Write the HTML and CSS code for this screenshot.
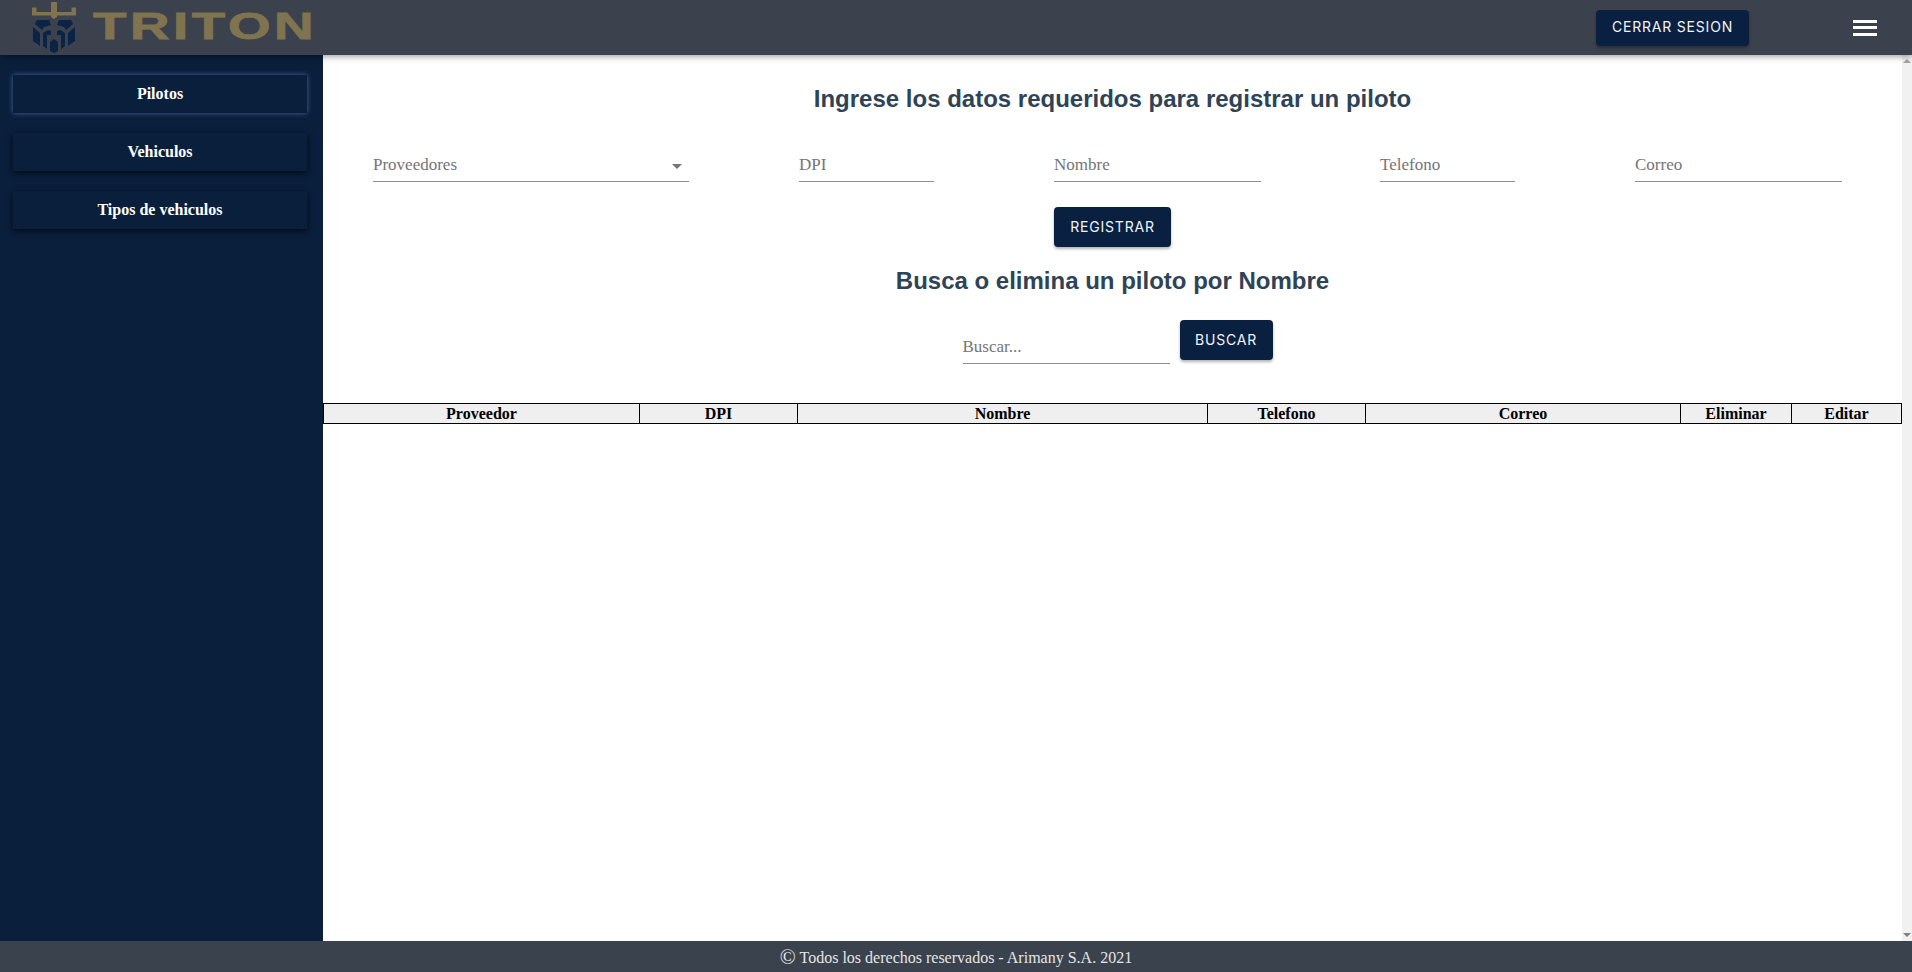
FILE: index.html
```html
<!DOCTYPE html>
<html>
<head>
    <meta charset="utf-8">
    <link rel="stylesheet" href="styles.css">
    <title>Triton - Pilotos</title>
</head>

<body>
    <div class="navbar">
        <div class="brand">
            <svg class="brand-icon" width="44" height="52" viewBox="0 0 44 52">
                <path fill="#7f7350" d="M0 5.500h4.500v4.500H19V0h6v10h14.500V5.500H44v8H25V15l-3 2-3-2v-1.500H0z"/>
                <g fill="#0a2347" transform="translate(0 -2)">
                    <path d="M5 20h12l2 5-7 2-2 3-7-6zM39 20H27l-2 5 7 2 2 3 7-6z"/>
                    <path d="M1 27l7 6v13L1 41zM43 27l-7 6v13l7-5z"/>
                    <path d="M11 33l5-3 3 1v4h-4v14l-4-3zM33 33l-5-3-3 1v4h4v14l4-3z"/>
                    <path d="M18 42l4-3 4 3v9l-4 2-4-2z"/>
                </g>
            </svg>
            <span class="brand-name">TRITON</span>
        </div>
        <button class="btn btn-logout">Cerrar sesion</button>
        <div class="hamburger"><span></span><span></span><span></span></div>
    </div>

    <div class="layout">
        <div class="sidebar">
            <div class="side-item active">Pilotos</div>
            <div class="side-item">Vehiculos</div>
            <div class="side-item">Tipos de vehiculos</div>
        </div>

        <div class="content">
            <h2 class="title title-first">Ingrese los datos requeridos para registrar un piloto</h2>

            <div class="form-row">
                <div class="field field-select">Proveedores<span class="caret"></span></div>
                <div class="field field-short">DPI</div>
                <div class="field field-name">Nombre</div>
                <div class="field field-short">Telefono</div>
                <div class="field field-name">Correo</div>
            </div>

            <div class="form-actions">
                <button class="btn btn-register">Registrar</button>
            </div>

            <h2 class="title">Busca o elimina un piloto por Nombre</h2>

            <div class="search-row">
                <div class="field field-search">Buscar...</div>
                <button class="btn btn-search">Buscar</button>
            </div>

            <table class="tabla">
                <tr>
                    <th class="col-prov">Proveedor</th>
                    <th class="col-mid">DPI</th>
                    <th class="col-name">Nombre</th>
                    <th class="col-mid">Telefono</th>
                    <th class="col-mail">Correo</th>
                    <th class="col-small">Eliminar</th>
                    <th class="col-edit">Editar</th>
                </tr>
            </table>
        </div>

        <div class="scrollbar">
            <span class="arrow-up"></span>
            <span class="arrow-down"></span>
        </div>
    </div>

    <div class="footer"><span class="copy">©</span> Todos los derechos reservados - Arimany S.A. 2021</div>
</body>
</html>
```

FILE: styles.css
```css
* {
    box-sizing: border-box;
}
body {
    margin: 0;
    height: 100vh;
    display: flex;
    flex-direction: column;
    overflow: hidden;
    background-color: #ffffff;
    font-family: "Liberation Serif", serif;
    font-size: 16px;
}

/* navbar */
.navbar {
    height: 55px;
    flex: none;
    display: flex;
    align-items: center;
    background-color: #3b424d;
    box-shadow: 0 2px 6px rgba(0, 0, 0, 0.35);
    position: relative;
    z-index: 2;
}
.brand {
    display: flex;
    align-items: center;
    padding-left: 32px;
    flex: 1;
}
.brand-icon {
    flex: none;
}
.brand-name {
    margin-left: 17px;
    margin-bottom: 2px;
    font-family: "Liberation Sans", sans-serif;
    font-weight: bold;
    font-size: 37px;
    line-height: 50px;
    letter-spacing: 2.4px;
    color: #7f7350;
    -webkit-text-stroke: 0.8px #7f7350;
    transform: scaleX(1.48);
    transform-origin: left center;
}
.hamburger {
    width: 24px;
    margin-left: 104px;
    margin-right: 35px;
    display: flex;
    flex-direction: column;
    gap: 3.5px;
}
.hamburger span {
    height: 3px;
    background-color: #ffffff;
}

/* buttons */
.btn {
    display: block;
    height: 40px;
    border: none;
    border-radius: 4px;
    padding: 0 0 2px;
    background-color: #0a2040;
    color: #f2f4f7;
    font-family: "Inter", sans-serif;
    font-size: 14px;
    letter-spacing: 0.8px;
    text-transform: uppercase;
    box-shadow: 0 2px 3px rgba(0, 0, 0, 0.3);
}
.btn-logout {
    height: 36px;
    width: 153px;
}
.btn-register {
    width: 117px;
}
.btn-search {
    width: 93px;
}

/* main layout */
.layout {
    flex: 1;
    display: flex;
    min-height: 0;
}
.sidebar {
    width: 323px;
    flex: none;
    padding: 20px 16px 0 13px;
    background-color: #0a1f3c;
}
.side-item {
    height: 38px;
    margin-bottom: 20px;
    display: flex;
    align-items: center;
    justify-content: center;
    background-color: #0a1f3c;
    color: #ffffff;
    font-weight: bold;
    box-shadow: 0 2px 6px rgba(0, 0, 0, 0.7);
}
.side-item.active {
    box-shadow: 0 0 5px #4a6899;
}
.content {
    flex: 1;
    min-width: 0;
}
.title {
    margin: 0;
    height: 28px;
    font-family: "Liberation Sans", sans-serif;
    font-size: 24px;
    line-height: 28px;
    text-align: center;
    color: #2f4356;
}
.title-first {
    margin-top: 30px;
}

/* form */
.field {
    height: 32px;
    border-bottom: 1px solid #8f8f8f;
    color: #757575;
    font-size: 17px;
    line-height: 30px;
    position: relative;
}
.form-row {
    display: flex;
    gap: 120px;
    margin-top: 37px;
    padding-left: 50px;
}
.field-select {
    width: 316px;
    margin-right: -10px;
}
.field-short {
    width: 135px;
}
.field-name {
    width: 207px;
    margin-right: -1px;
}
.caret {
    position: absolute;
    right: 7px;
    top: 14px;
    border-left: 5px solid transparent;
    border-right: 5px solid transparent;
    border-top: 5px solid #757575;
}
.form-actions {
    display: flex;
    justify-content: center;
    margin-top: 25px;
    margin-bottom: 20px;
}
.search-row {
    display: flex;
    justify-content: center;
    align-items: flex-start;
    gap: 10px;
    margin-top: 25px;
    padding-left: 10px;
}
.field-search {
    width: 207px;
    height: 33px;
    margin-top: 11px;
    line-height: 32px;
}

/* table */
.tabla {
    width: calc(100% - 1px);
    margin-top: 39px;
    border-collapse: collapse;
    table-layout: fixed;
}
.tabla th {
    height: 20px;
    padding: 0;
    border: 1px solid #000000;
    background-color: #efefef;
    color: #000000;
    font-size: 16px;
    line-height: 18px;
}
.col-prov {
    width: 316px;
}
.col-mid {
    width: 158px;
}
.col-name {
    width: 410px;
}
.col-mail {
    width: 315px;
}
.col-small {
    width: 111px;
}
.col-edit {
    width: 110px;
}

/* scrollbar strip */
.scrollbar {
    width: 10px;
    flex: none;
    display: flex;
    flex-direction: column;
    justify-content: space-between;
    align-items: center;
    padding: 4px 0;
    background-color: #f1f1f1;
}
.arrow-up {
    border-left: 4px solid transparent;
    border-right: 4px solid transparent;
    border-bottom: 4px solid #a3a3a3;
}
.arrow-down {
    border-left: 4px solid transparent;
    border-right: 4px solid transparent;
    border-top: 4px solid #808080;
}

/* footer */
.footer {
    height: 31px;
    flex: none;
    display: flex;
    align-items: center;
    justify-content: center;
    padding-top: 2px;
    background-color: #3a424d;
    color: #e6e6e6;
    white-space: pre;
}
.copy {
    font-size: 21px;
    line-height: 1;
    font-weight: normal;
}
```
